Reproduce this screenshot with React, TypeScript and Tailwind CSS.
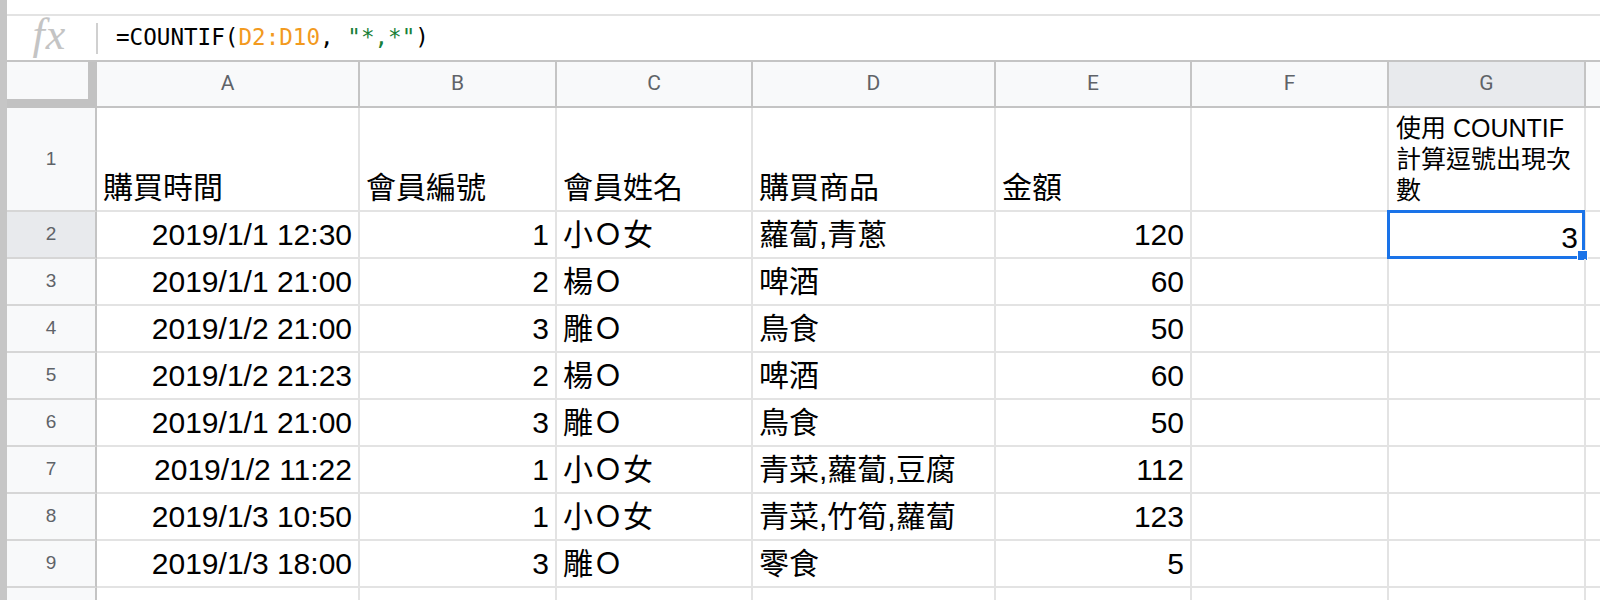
import React from "react";

const COLS = [263, 197, 196, 243, 196, 197, 197];
const LETTERS = ["A", "B", "C", "D", "E", "F", "G"];

const DATA: string[][] = [
  ["2019/1/1 12:30", "1", "小Ｏ女", "蘿蔔,青蔥", "120"],
  ["2019/1/1 21:00", "2", "楊Ｏ", "啤酒", "60"],
  ["2019/1/2 21:00", "3", "雕Ｏ", "鳥食", "50"],
  ["2019/1/2 21:23", "2", "楊Ｏ", "啤酒", "60"],
  ["2019/1/1 21:00", "3", "雕Ｏ", "鳥食", "50"],
  ["2019/1/2 11:22", "1", "小Ｏ女", "青菜,蘿蔔,豆腐", "112"],
  ["2019/1/3 10:50", "1", "小Ｏ女", "青菜,竹筍,蘿蔔", "123"],
  ["2019/1/3 18:00", "3", "雕Ｏ", "零食", "5"],
];

const RIGHT = [true, true, false, false, true];

function RowHeader({ n, h, active }: { n: number; h: number; active?: boolean }) {
  return (
    <div
      style={{ height: h }}
      className={`w-[90px] shrink-0 flex items-center justify-center border-r-2 border-b-2 border-r-[#c4c4c4] border-b-[#d6d6d6] text-[19px] text-[#5f6368] font-['Liberation_Sans',sans-serif] ${
        active ? "bg-[#e8eaed]" : "bg-[#f8f9fa]"
      }`}
    >
      {n}
    </div>
  );
}

export default function App() {
  const cellFont = "font-['Liberation_Sans','Noto_Sans_CJK_TC',sans-serif] text-[30px] text-black";
  return (
    <div className="flex w-[1600px] h-[600px] overflow-hidden bg-white">
      <div className="w-[7px] shrink-0 bg-[#c6c6c6]" />
      <div className="flex-1 flex flex-col min-w-0">
        {/* top strip */}
        <div className="h-[16px] shrink-0 border-b-2 border-[#e3e3e3]" />
        {/* formula bar */}
        <div className="h-[46px] shrink-0 flex items-center border-b-2 border-[#c4c4c4]">
          <div className="w-[89px] flex items-center justify-center">
            <span className="font-['Liberation_Serif',serif] italic text-[44px] leading-none text-[#c4c4c4] tracking-[1px] -mt-[6px] -ml-[4px]">
              fx
            </span>
          </div>
          <div className="w-[2px] h-[31px] bg-[#d0d0d0]" />
          <div className="ml-[18px] font-['DejaVu_Sans_Mono',monospace] text-[22.6px] text-black whitespace-pre">
            =COUNTIF(<span className="text-[#f29a1f]">D2:D10</span>, <span className="text-[#188038]">"*,*"</span>)
          </div>
        </div>

        {/* column headers */}
        <div className="flex h-[46px] shrink-0">
          <div className="w-[90px] shrink-0 bg-[#c2c2c2]">
            <div className="w-[81px] h-[37px] bg-[#f8f9fa]" />
          </div>
          {COLS.map((w, i) => (
            <div
              key={i}
              style={{ width: w }}
              className={`shrink-0 flex items-center justify-center border-r-2 border-b-2 border-[#c4c4c4] text-[21px] text-[#5f6368] font-['Roboto',sans-serif] ${
                i === 6 ? "bg-[#e8eaed]" : "bg-[#f8f9fa]"
              }`}
            >
              {LETTERS[i]}
            </div>
          ))}
          <div className="flex-1 bg-[#f8f9fa] border-b-2 border-[#c4c4c4]" />
        </div>

        {/* row 1 */}
        <div className="flex h-[104px] shrink-0">
          <RowHeader n={1} h={104} />
          {["購買時間", "會員編號", "會員姓名", "購買商品", "金額", ""].map((t, i) => (
            <div
              key={i}
              style={{ width: COLS[i] }}
              className={`shrink-0 flex items-end px-[6px] pb-[4px] leading-[36px] border-r-2 border-b-2 border-[#e3e3e3] ${cellFont}`}
            >
              {t}
            </div>
          ))}
          <div
            style={{ width: COLS[6] }}
            className="shrink-0 flex flex-col justify-end px-[7px] pb-[4px] border-r-2 border-b-2 border-[#e3e3e3] font-['Liberation_Sans','Noto_Sans_CJK_TC',sans-serif] text-[25px] leading-[31px] text-black"
          >
            <div>使用 COUNTIF</div>
            <div>計算逗號出現次</div>
            <div>數</div>
          </div>
          <div className="flex-1 border-b-2 border-[#e3e3e3]" />
        </div>

        {/* data rows */}
        {DATA.map((row, r) => (
          <div key={r} className="flex h-[47px] shrink-0">
            <RowHeader n={r + 2} h={47} active={r === 0} />
            {row.map((t, i) => (
              <div
                key={i}
                style={{ width: COLS[i] }}
                className={`shrink-0 flex items-end px-[6px] pb-[4px] leading-[36px] whitespace-nowrap border-r-2 border-b-2 border-[#e3e3e3] ${cellFont} ${
                  RIGHT[i] ? "justify-end" : "justify-start"
                }`}
              >
                {t}
              </div>
            ))}
            <div style={{ width: COLS[5] }} className="shrink-0 border-r-2 border-b-2 border-[#e3e3e3]" />
            <div
              style={{ width: COLS[6] }}
              className={`shrink-0 relative flex items-end justify-end px-[6px] pb-[1px] leading-[36px] border-r-2 border-b-2 border-[#e3e3e3] ${cellFont}`}
            >
              {r === 0 ? (
                <>
                  3
                  <div className="absolute -top-[2px] -left-[2px] w-[198px] h-[49px] border-[3px] border-[#1a73e8]" />
                  <div className="absolute left-[188px] top-[38px] w-[11px] h-[11px] bg-[#1a73e8] border border-white" />
                </>
              ) : null}
            </div>
            <div className="flex-1 border-b-2 border-[#e3e3e3]" />
          </div>
        ))}
        {/* row 10 */}
        <div className="flex h-[47px] shrink-0">
          <RowHeader n={10} h={47} />
          {COLS.map((w, i) => (
            <div key={i} style={{ width: w }} className="shrink-0 border-r-2 border-b-2 border-[#e3e3e3]" />
          ))}
          <div className="flex-1" />
        </div>
      </div>
    </div>
  );
}
